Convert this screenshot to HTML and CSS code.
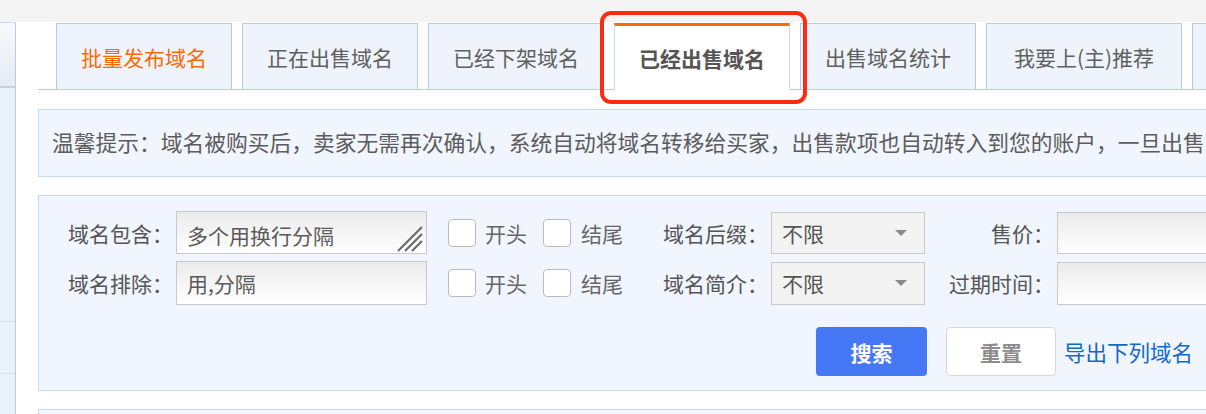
FILE: index.html
```html
<!DOCTYPE html>
<html lang="zh-CN">
<head>
  <meta charset="UTF-8">
  <title>已经出售域名</title>
  <link rel="stylesheet" href="styles.css">
</head>
<body>
  <div class="topbar"></div>
  <div class="layout">
    <aside class="sidebar">
      <div class="side-head"></div>
      <div class="side-item side-tall"></div>
      <div class="side-item"></div>
      <div class="side-item"></div>
    </aside>

    <main class="content">
      <ul class="tabs">
        <li class="tab tab-hot">批量发布域名</li>
        <li class="tab">正在出售域名</li>
        <li class="tab">已经下架域名</li>
        <li class="tab tab-active">已经出售域名</li>
        <li class="tab">出售域名统计</li>
        <li class="tab tab-wide">我要上(主)推荐</li>
        <li class="tab"></li>
      </ul>

      <div class="tip">温馨提示：域名被购买后，卖家无需再次确认，系统自动将域名转移给买家，出售款项也自动转入到您的账户，一旦出售</div>

      <form class="filter">
        <div class="row">
          <label class="lbl">域名包含：</label>
          <span class="area-wrap">
            <textarea class="field area" placeholder="多个用换行分隔"></textarea>
            <svg class="grip" width="26" height="26" viewBox="0 0 26 26">
              <path d="M1 25L25 1M8 25L25 8M15 25L25 15" stroke="#6b6b6b" stroke-width="2.2"/>
            </svg>
          </span>
          <span class="checks">
            <input type="checkbox" class="chk"><span class="chk-txt">开头</span>
            <input type="checkbox" class="chk"><span class="chk-txt">结尾</span>
          </span>
          <label class="lbl lbl-mid">域名后缀：</label>
          <span class="sel">不限</span>
          <label class="lbl lbl-right">售价：</label>
          <input type="text" class="field wide">
        </div>
        <div class="row row-2">
          <label class="lbl">域名排除：</label>
          <input type="text" class="field text" placeholder="用,分隔">
          <span class="checks">
            <input type="checkbox" class="chk"><span class="chk-txt">开头</span>
            <input type="checkbox" class="chk"><span class="chk-txt">结尾</span>
          </span>
          <label class="lbl lbl-mid">域名简介：</label>
          <span class="sel">不限</span>
          <label class="lbl lbl-right">过期时间：</label>
          <input type="text" class="field wide">
        </div>
        <div class="actions">
          <button type="button" class="btn btn-search">搜索</button>
          <button type="reset" class="btn btn-reset">重置</button>
          <a href="#" class="export">导出下列域名</a>
        </div>
      </form>

      <div class="list"></div>
    </main>
  </div>

  <div class="mark"></div>
</body>
</html>
```

FILE: styles.css
```css
body {
  margin: 0;
  font-family: "Noto Sans CJK SC", "Noto Sans", sans-serif;
  font-size: 21px;
  color: #555;
  background: #fff;
  overflow: hidden;
  width: 1206px;
  height: 414px;
}

.topbar {
  height: 22px;
  background: #f4f4f4;
}

.layout {
  display: flex;
}

.sidebar {
  width: 15px;
  flex: none;
  height: 392px;
  background: #e9f3fd;
  border-right: 1px solid #b6cde8;
}

.side-head {
  height: 63px;
  border-top: 1px solid #c6d8ee;
  border-bottom: 2px solid #c9d0d9;
  border-top-right-radius: 3px;
  background: linear-gradient(#f8f9fc, #e6ebf2);
}

.side-item {
  height: 51px;
  border-bottom: 1px solid #d3e0ee;
}

.side-tall {
  height: 233px;
}

.content {
  width: 1300px;
  flex: none;
  padding: 1px 0 0 22px;
}

.tabs {
  display: flex;
  gap: 10px;
  margin: 0;
  padding: 0 0 0 18px;
  list-style: none;
  border-bottom: 1px solid #b6cde9;
  height: 66px;
}

.tab {
  width: 176px;
  flex: none;
  box-sizing: border-box;
  height: 66px;
  line-height: 66px;
  text-align: center;
  background: #eff4fc;
  border: 1px solid #b6cde9;
  border-bottom: none;
  color: #606060;
}

.tab-wide {
  width: 196px;
}

.tab-hot {
  color: #ff6a00;
}

.tab-active {
  height: 67px;
  background: #fff;
  border-top: 3px solid #ff6a00;
  border-color: #ff6a00 #c9d9ec #fff;
  line-height: 64px;
  font-weight: bold;
  color: #555;
}

.tip {
  margin-top: 19px;
  height: 66px;
  line-height: 64px;
  padding-left: 13px;
  background: #f1f5fd;
  border: 1px solid #c6dbf2;
  font-size: 21.75px;
  color: #5c5c5c;
  white-space: nowrap;
  overflow: hidden;
}

.filter {
  margin: 18px 0 0;
  padding: 15px 0 14px 29px;
  background: #f1f5fd;
  border: 1px solid #c6dbf2;
}

.row {
  display: flex;
  align-items: center;
  height: 43px;
}

.row-2 {
  margin-top: 7px;
  height: 44px;
}

.lbl {
  width: 108px;
  flex: none;
  color: #555;
}

.lbl-mid {
  margin-left: 40px;
}

.lbl-right {
  width: 132px;
  text-align: right;
  padding-right: 3px;
  box-sizing: border-box;
}

.field {
  box-sizing: border-box;
  margin: 0;
  border: 1px solid #c9c9c9;
  background: linear-gradient(#ebebeb, #fff);
  font-family: inherit;
  font-size: 21px;
  color: #555;
  padding: 0 10px;
  outline: none;
}

.field::placeholder {
  color: #5a5a5a;
}

.area-wrap {
  position: relative;
  display: flex;
}

.area {
  width: 251px;
  height: 43px;
  line-height: 41px;
  padding-top: 3px;
  resize: none;
  overflow: hidden;
}

.grip {
  position: absolute;
  right: 4px;
  bottom: 2px;
}

.text {
  width: 251px;
  height: 44px;
}

.wide {
  width: 220px;
  height: 42px;
}

.row-2 .wide {
  height: 43px;
}

.checks {
  display: flex;
  align-items: center;
  margin-left: 21px;
}

.chk {
  appearance: none;
  margin: 0;
  width: 28px;
  height: 28px;
  border: 1px solid #bbb;
  border-radius: 4px;
  background: #fff;
}

.chk-txt {
  margin: 0 16px 0 9px;
  color: #666;
}

.chk-txt:last-child {
  margin-right: 0;
  margin-left: 10px;
}

.sel {
  position: relative;
  box-sizing: border-box;
  width: 154px;
  height: 42px;
  line-height: 40px;
  padding-left: 10px;
  background: #f3f3f3;
  border: 1px solid #c9c9c9;
  color: #555;
}

.row-2 .sel {
  height: 43px;
}

.sel::after {
  content: "";
  position: absolute;
  right: 17px;
  top: 17px;
  border-left: 6px solid transparent;
  border-right: 6px solid transparent;
  border-top: 6px solid #8a8a8a;
}

.actions {
  display: flex;
  align-items: center;
  margin-top: 22px;
  padding-left: 748px;
}

.btn {
  box-sizing: border-box;
  height: 49px;
  border-radius: 4px;
  font-family: inherit;
  font-size: 21px;
  font-weight: bold;
  cursor: pointer;
}

.btn-search {
  width: 111px;
  border: none;
  background: #4677f4;
  color: #fff;
}

.btn-reset {
  width: 110px;
  margin-left: 19px;
  border: 1px solid #d8d8d8;
  background: #fff;
  color: #8c8c8c;
}

.export {
  margin-left: 8px;
  color: #1369c9;
  text-decoration: none;
  font-size: 21.5px;
}

.list {
  margin-top: 18px;
  height: 40px;
  background: #f1f5fd;
  border: 1px solid #c6dbf2;
}

.mark {
  position: absolute;
  left: 600px;
  top: 11px;
  width: 199px;
  height: 85px;
  border: 4px solid #ff2a12;
  border-radius: 11px;
}
```
